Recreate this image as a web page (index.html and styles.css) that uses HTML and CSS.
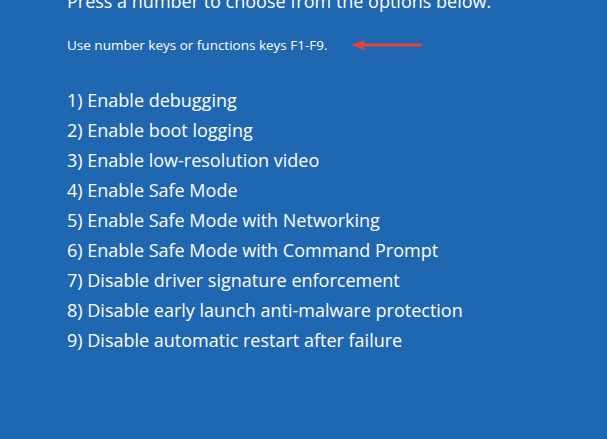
FILE: index.html
```html
<!DOCTYPE html>
<html lang="en">
<head>
    <meta charset="UTF-8">
    <title>Startup Settings</title>
    <link rel="stylesheet" href="styles.css">
</head>
<body>
    <div class="screen">
        <h1 class="prompt">Press a number to choose from the options below.</h1>
        <p class="hint">
            <span>Use number keys or functions keys F1-F9.</span>
            <svg class="arrow" width="74" height="12" viewBox="0 0 74 12">
                <path d="M72 6 H14" stroke="#e8413c" stroke-width="3" stroke-linecap="round"/>
                <path d="M2 6 L16 1 L14 6 L16 11 Z" fill="#e8413c"/>
            </svg>
        </p>
        <ol class="options">
            <li>1) Enable debugging</li>
            <li>2) Enable boot logging</li>
            <li>3) Enable low-resolution video</li>
            <li>4) Enable Safe Mode</li>
            <li>5) Enable Safe Mode with Networking</li>
            <li>6) Enable Safe Mode with Command Prompt</li>
            <li>7) Disable driver signature enforcement</li>
            <li>8) Disable early launch anti-malware protection</li>
            <li>9) Disable automatic restart after failure</li>
        </ol>
    </div>
</body>
</html>
```
FILE: styles.css
```css
body {
    margin: 0;
    background-color: #1f67b1; /* Windows mavi */
    color: #ffffff;
    font-family: 'Open Sans', 'Noto Sans', sans-serif;
    height: 100vh;
    overflow: hidden;
}
.screen {
    padding-left: 67px;
}
.prompt {
    font-size: 18px;
    font-weight: 400;
    line-height: 24px;
    margin: -11px 0 0 0;
}
.hint {
    font-size: 13.5px;
    line-height: 20px;
    margin: 22px 0 0 0;
    display: flex;
    align-items: center;
}
.arrow {
    margin-left: 21px;
}
.options {
    list-style: none;
    margin: 30px 0 0 0;
    padding: 0;
}
.options li {
    font-size: 18px;
    line-height: 30px;
}
```
